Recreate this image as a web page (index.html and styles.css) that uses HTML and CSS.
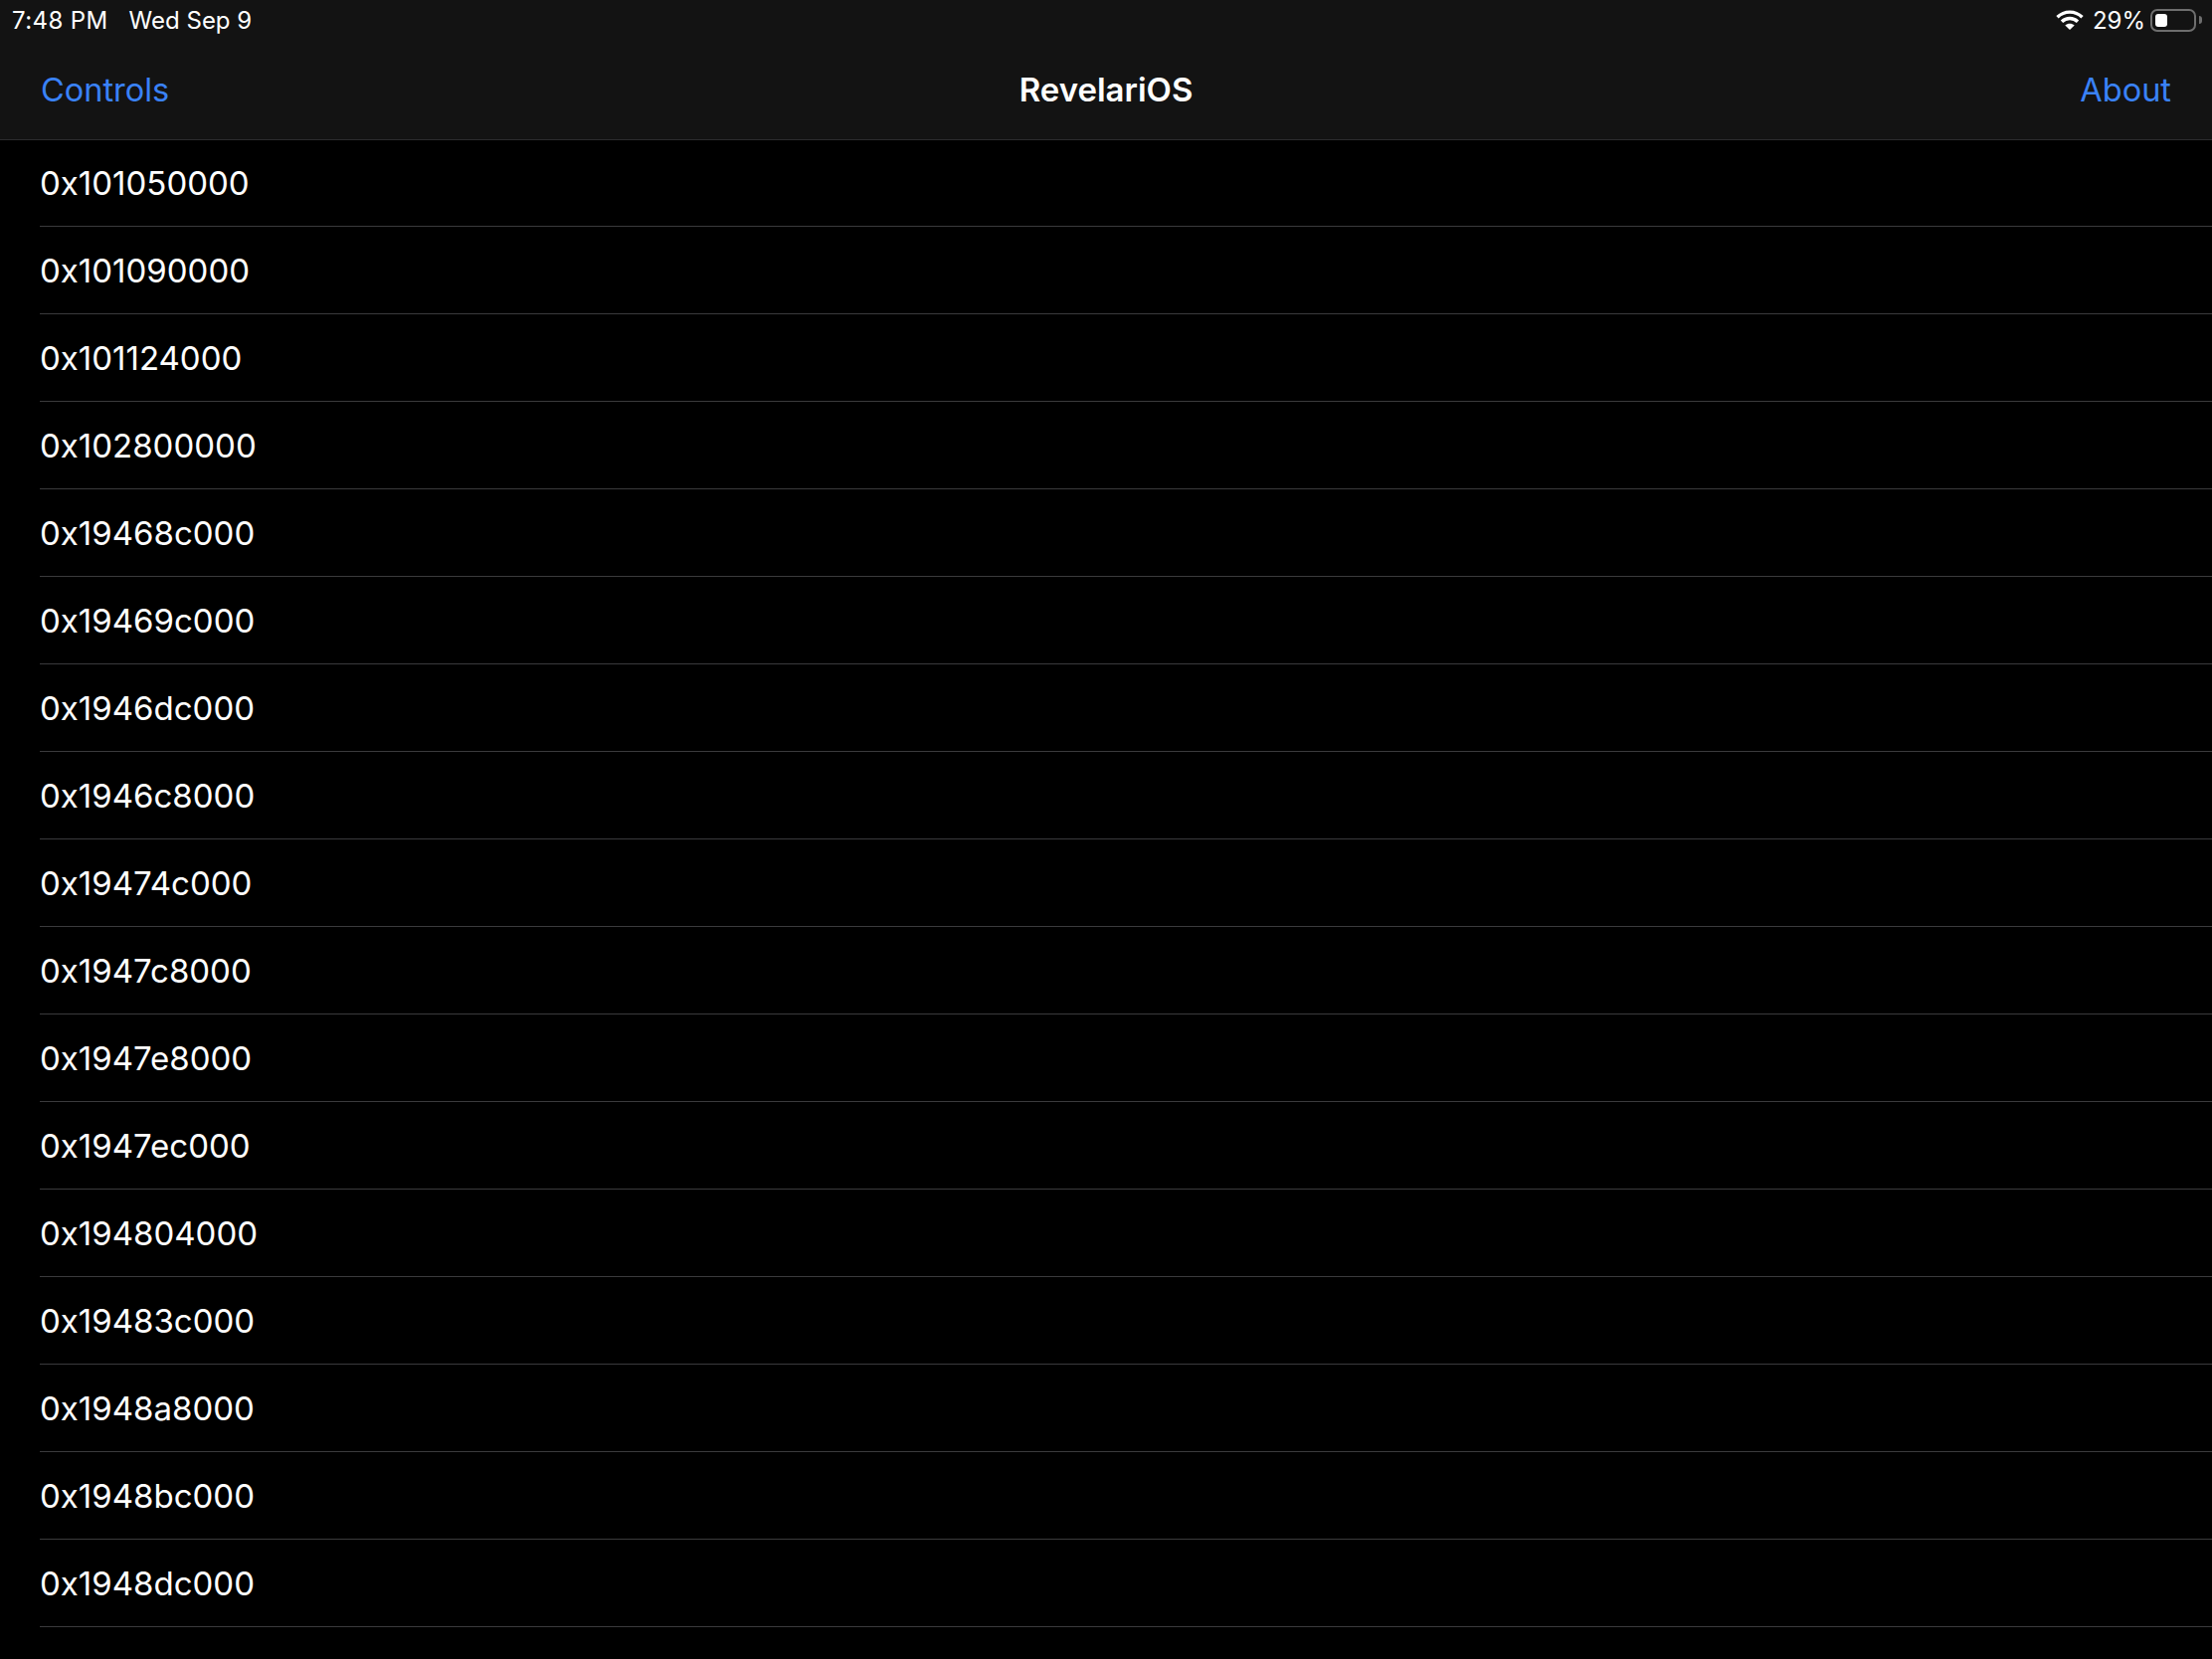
FILE: index.html
```html
<!DOCTYPE html>
<html lang="en">
<head>
    <meta charset="UTF-8">
    <title>RevelariOS</title>
    <link rel="stylesheet" href="styles.css">
</head>
<body>
    <div class="screen">
        <div class="top">
            <div class="status">
                <div class="status-left">
                    <span class="time">7:48 PM</span>
                    <span>Wed Sep 9</span>
                </div>
                <div class="status-right">
                    <svg class="wifi" width="28" height="20" viewBox="0 0 28 20">
                        <path d="M1.500 7.200C8.600.4 19.400.4 26.500 7.200" fill="none" stroke="#fff" stroke-width="3.400"/>
                        <path d="M6 11.800c4.600-4.400 11.400-4.400 16 0" fill="none" stroke="#fff" stroke-width="3.400"/>
                        <path d="M9.300 15.500c2.700-2.500 6.700-2.500 9.400 0L14 20z" fill="#fff"/>
                    </svg>
                    <span>29%</span>
                    <div class="battery"><div class="battery-level"></div></div>
                    <div class="battery-tip"></div>
                </div>
            </div>
            <div class="nav">
                <a class="nav-link">Controls</a>
                <h1>RevelariOS</h1>
                <a class="nav-link">About</a>
            </div>
        </div>
        <div class="list">
            <div class="row"><span>0x101050000</span></div>
            <div class="row"><span>0x101090000</span></div>
            <div class="row"><span>0x101124000</span></div>
            <div class="row"><span>0x102800000</span></div>
            <div class="row"><span>0x19468c000</span></div>
            <div class="row"><span>0x19469c000</span></div>
            <div class="row"><span>0x1946dc000</span></div>
            <div class="row"><span>0x1946c8000</span></div>
            <div class="row"><span>0x19474c000</span></div>
            <div class="row"><span>0x1947c8000</span></div>
            <div class="row"><span>0x1947e8000</span></div>
            <div class="row"><span>0x1947ec000</span></div>
            <div class="row"><span>0x194804000</span></div>
            <div class="row"><span>0x19483c000</span></div>
            <div class="row"><span>0x1948a8000</span></div>
            <div class="row"><span>0x1948bc000</span></div>
            <div class="row"><span>0x1948dc000</span></div>
            <div class="row"><span>0x1948ec000</span></div>
        </div>
    </div>
</body>
</html>
```
FILE: styles.css
```css
html, body {
    margin: 0;
    background-color: #000;
    overflow: hidden;
}
.screen {
    width: 2224px;
    height: 1668px;
    overflow: hidden;
    font-family: Inter, "Liberation Sans", sans-serif;
    color: #fff;
}
.top {
    height: 140px;
    background-color: #131313;
    border-bottom: 1px solid #2c2c2e;
}
.status {
    height: 40px;
    padding: 0 10px 0 12px;
    display: flex;
    justify-content: space-between;
    align-items: center;
    font-size: 24px;
}
.status-left {
    display: flex;
    gap: 21px;
}
.time {
    letter-spacing: 0.4px;
}
.status-right {
    display: flex;
    align-items: center;
}
.wifi {
    margin-right: 9px;
}
.battery {
    width: 46px;
    height: 23px;
    margin-left: 5px;
    padding: 3px;
    border: 2px solid #6e6e6e;
    border-radius: 7px;
    box-sizing: border-box;
}
.battery-level {
    width: 12px;
    height: 100%;
    background-color: #fff;
    border-radius: 3px;
}
.battery-tip {
    width: 3px;
    height: 8px;
    margin-left: 3px;
    background-color: #6e6e6e;
    border-radius: 0 3px 3px 0;
}
.nav {
    height: 100px;
    padding: 0 41px;
    display: flex;
    justify-content: space-between;
    align-items: center;
    position: relative;
}
.nav h1 {
    margin: 0;
    font-size: 33px;
    font-weight: 600;
    position: absolute;
    left: 0;
    right: 0;
    text-align: center;
}
.nav-link {
    font-size: 32.5px;
    color: #3a82f7;
}
.list {
    margin-top: -1px;
    padding-left: 40px;
}
.row {
    height: 88px;
    box-sizing: border-box;
    border-bottom: 1px solid #3a3a3c;
    display: flex;
    align-items: center;
    font-size: 33px;
    color: #fff;
}
```
